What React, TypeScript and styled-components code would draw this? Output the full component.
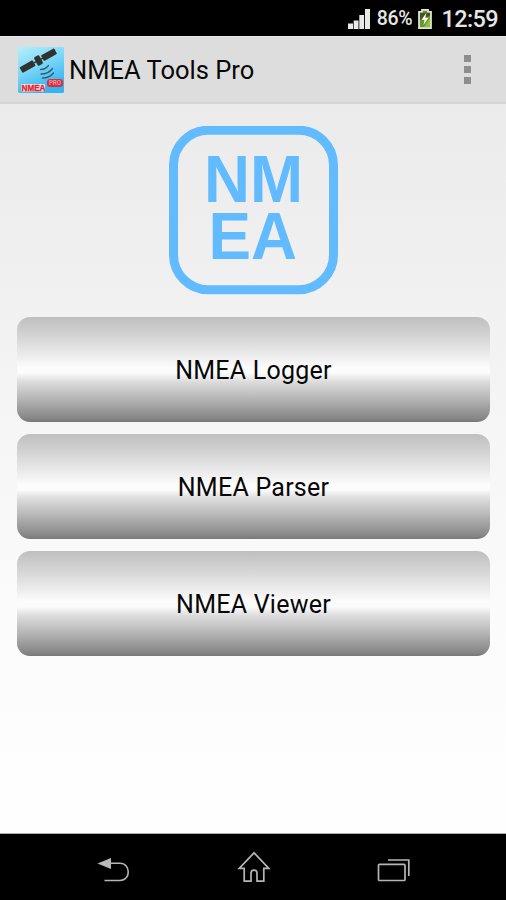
import React from "react";
import styled, { createGlobalStyle } from "styled-components";

const GlobalStyle = createGlobalStyle`
  * { box-sizing: border-box; }
  body { margin: 0; background: #000; font-family: Roboto, "Noto Sans", sans-serif; }
`;

const Screen = styled.div`
  width: 506px;
  height: 900px;
  display: flex;
  flex-direction: column;
  overflow: hidden;
  background: #000;
`;

const StatusBar = styled.header`
  height: 36px;
  flex: none;
  display: flex;
  align-items: center;
  justify-content: flex-end;
  padding: 1px 8px 0 0;
  color: #e6e6e6;
`;

const Battery = styled.span`
  margin: 1px 6px 0 6px;
  font-size: 19.5px;
  line-height: 24px;
  font-weight: 500;
  letter-spacing: -0.3px;
`;

const Clock = styled.time`
  margin: 1px 0 0 9px;
  font-size: 23.5px;
  line-height: 28px;
  font-weight: 500;
  letter-spacing: -0.6px;
`;

const ActionBar = styled.div`
  height: 68px;
  flex: none;
  display: flex;
  align-items: center;
  padding: 0 33px 0 18px;
  background: #dddddd;
  border-top: 1px solid #e9e9e9;
  border-bottom: 2px solid #d4d4d4;
`;

const Title = styled.h1`
  flex: 1;
  margin: 0 0 0 5px;
  font-size: 25.5px;
  line-height: 32px;
  font-weight: 400;
  color: #080808;
`;

const Overflow = styled.button`
  display: flex;
  flex-direction: column;
  gap: 4px;
  padding: 0;
  margin: 0 2px 0 0;
  border: 0;
  background: none;
`;

const Dot = styled.i`
  width: 7px;
  height: 7px;
  background: #8d8d8d;
`;

const Content = styled.main`
  flex: 1;
  display: flex;
  flex-direction: column;
  align-items: center;
  padding: 22px 16px 0 17px;
  background: linear-gradient(#ebebeb, #f0f0f0 24%, #f6f6f6 46%, #fbfbfb 70%, #fefefe 94%, #fefefe);
  border-bottom: 1px solid #a9a9a9;
`;

const Menu = styled.nav`
  align-self: stretch;
  display: flex;
  flex-direction: column;
  gap: 12px;
  margin-top: 22px;
`;

const MenuButton = styled.button`
  height: 105px;
  padding: 3px 0 0;
  border: 0;
  border-radius: 13px;
  background: linear-gradient(
    #bfbfbf 0%,
    #d6d6d6 20%,
    #efefef 39%,
    #fcfcfc 48%,
    #fcfcfc 53%,
    #dedede 61%,
    #b5b5b5 78%,
    #858585 97%,
    #777777 100%
  );
  font-family: Roboto, sans-serif;
  font-size: 25px;
  line-height: 30px;
  letter-spacing: 0.25px;
  color: #080808;
`;

const NavBar = styled.footer`
  height: 66px;
  flex: none;
  display: flex;
  align-items: center;
  justify-content: space-between;
  padding: 6px 95px 0 96px;
`;

const HomeButton = styled.span`
  display: flex;
  margin-bottom: 6px;
`;

const SignalIcon = () => (
  <svg width="23" height="20" viewBox="0 0 23 20" fill="#e9e9e9">
    <path d="M0 14.500h5V20H0zM5.700 11.500h4.800V20H5.700zM11.300 6h4.800v14h-4.800zM17 0h5v20h-5z" />
  </svg>
);

const BatteryIcon = () => (
  <svg width="14" height="20" viewBox="0 0 14 20">
    <path d="M4 .8h6v2h3v16.4H1V2.800h3z" fill="#69962c" stroke="#e4e9dc" strokeWidth="1.700" />
    <path d="M2 3.700h10v3L2 11z" fill="#303a20" opacity=".7" />
    <path d="M12 9v9H6z" fill="#a7cf3f" opacity=".7" />
    <path d="M8.200 4L3.600 10.700h3L5.500 16l5-7.300H7.400z" fill="#fff" />
  </svg>
);

const AppIcon = () => (
  <svg width="46" height="46" viewBox="0 0 46 46">
    <defs>
      <linearGradient id="sky" x1="0" y1="0" x2=".45" y2="1">
        <stop offset="0" stopColor="#b5eefb" />
        <stop offset=".5" stopColor="#7bd7f8" />
        <stop offset="1" stopColor="#35b5ef" />
      </linearGradient>
    </defs>
    <rect width="46" height="46" rx="1.500" fill="url(#sky)" />
    <g transform="translate(20.500 13.500) rotate(-29)" fill="#30332f">
      <rect x="-20" y="-3.200" width="15" height="6.400" rx="1" />
      <rect x="4.500" y="-3.200" width="15" height="6.400" rx="1" />
      <rect x="-5" y="-.8" width="10" height="1.600" />
      <rect x="-3" y="-4.800" width="6" height="9.600" rx="1.500" />
    </g>
    <g fill="none" stroke="#345c6c" strokeWidth="1.300" strokeLinecap="round">
      <path d="M22.500 22.500q5 0 8-4M23 27q7.500 0 11.500-5.500M24.500 31q7 0 11-5" />
    </g>
    <rect x="3" y="37" width="24" height="7.500" rx="1" fill="#f5e4ea" />
    <text x="3.500" y="44" textLength="24" lengthAdjust="spacingAndGlyphs" fontFamily="Liberation Sans" fontWeight="700" fontSize="8.500" fill="#e92632" stroke="#e92632" strokeWidth=".4">NMEA</text>
    <rect x="29" y="32" width="16" height="8" rx="3" fill="#d9303e" />
    <text x="31" y="38.300" textLength="12" lengthAdjust="spacingAndGlyphs" fontFamily="Liberation Sans" fontWeight="700" fontSize="6.500" fill="#f19ba4">PRO</text>
  </svg>
);

const NmeaLogo = () => (
  <svg
    width="169"
    height="169"
    viewBox="0 0 169 169"
    fill="#62bbff"
    fontFamily="Liberation Sans, Arial, sans-serif"
    fontWeight="700"
    fontSize="67"
  >
    <rect x="4.500" y="4.200" width="160" height="159.500" rx="35" fill="none" stroke="#62bbff" strokeWidth="9" />
    <text x="35" y="75.500" textLength="99" lengthAdjust="spacingAndGlyphs">NM</text>
    <text x="39.500" y="133.300" textLength="88.500" lengthAdjust="spacingAndGlyphs">EA</text>
  </svg>
);

const BackIcon = () => (
  <svg width="34" height="26" viewBox="0 0 34 26">
    <path d="M1.500 6.500L15 1v11z" fill="#b9b9b9" />
    <path d="M14 6.300h10c11 0 11 17.200 0 17.200H8.500" fill="none" stroke="#b5b5b5" strokeWidth="1.600" />
  </svg>
);

const HomeIcon = () => (
  <svg width="34" height="32" viewBox="0 0 34 32" fill="none" stroke="#b5b5b5" strokeWidth="1.700">
    <path d="M17 1.800L2.200 17.400h5v12.800H14v-8q0-3 3-3t3 3v8h6.800V17.400h5z" />
  </svg>
);

const RecentIcon = () => (
  <svg width="34" height="24" viewBox="0 0 34 24" fill="none" stroke="#b5b5b5" strokeWidth="1.700">
    <rect x="1.500" y="6.300" width="26.500" height="16.200" rx="1" />
    <path d="M11 2h20.800v16" />
  </svg>
);

const tools = ["NMEA Logger", "NMEA Parser", "NMEA Viewer"];

export default function App() {
  return (
    <>
      <GlobalStyle />
      <Screen>
        <StatusBar>
          <SignalIcon />
          <Battery>86%</Battery>
          <BatteryIcon />
          <Clock>12:59</Clock>
        </StatusBar>
        <ActionBar>
          <AppIcon />
          <Title>NMEA Tools Pro</Title>
          <Overflow aria-label="More options">
            <Dot />
            <Dot />
            <Dot />
          </Overflow>
        </ActionBar>
        <Content>
          <NmeaLogo />
          <Menu>
            {tools.map((tool) => (
              <MenuButton key={tool}>{tool}</MenuButton>
            ))}
          </Menu>
        </Content>
        <NavBar>
          <BackIcon />
          <HomeButton>
            <HomeIcon />
          </HomeButton>
          <RecentIcon />
        </NavBar>
      </Screen>
    </>
  );
}
